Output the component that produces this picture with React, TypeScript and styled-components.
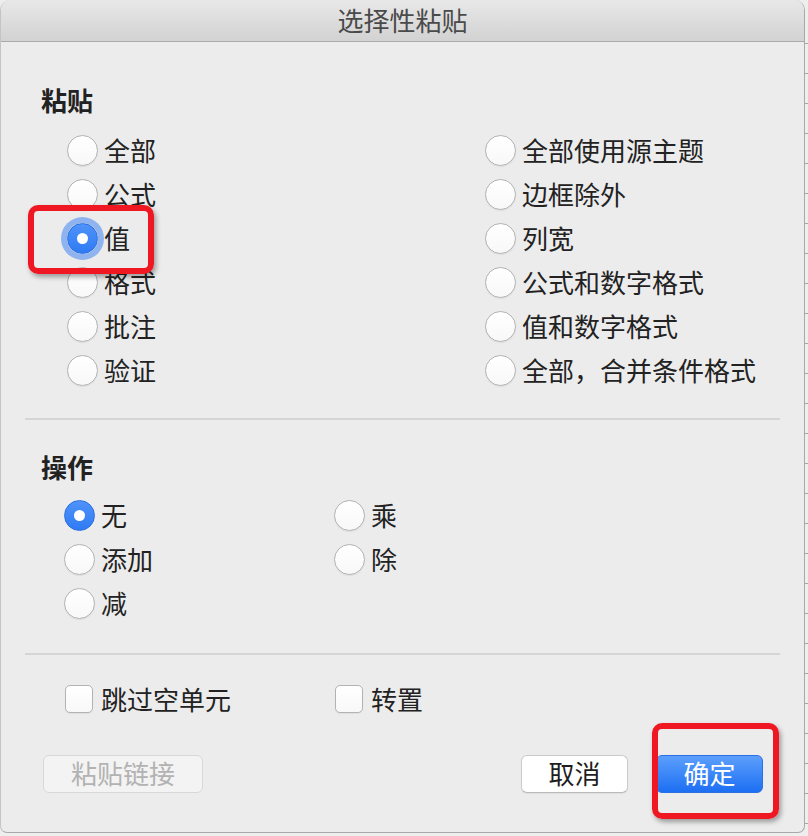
import React from "react";
import styled, { createGlobalStyle, css } from "styled-components";

const GlobalStyle = createGlobalStyle`
  html, body { margin: 0; padding: 0; }
  body {
    background: #ededed;
    font-family: "Noto Sans CJK SC", "Noto Sans", sans-serif;
  }
  * { box-sizing: border-box; }
`;

const Page = styled.div`
  position: relative;
  width: 808px;
  height: 836px;
  overflow: hidden;
  background-color: #eeeeee;
  background-image: repeating-linear-gradient(
    to bottom,
    transparent 0 29px,
    #a8a8a8 29px 30px
  );
  background-position: 0 14px;
`;

const Dialog = styled.div`
  position: relative;
  width: 805px;
  height: 833px;
  background: #ececec;
  border: 1px solid #a9a9a9;
  border-top: none;
  border-left-color: #c4c4c4;
  border-radius: 10px 10px 7px 7px;
  display: flex;
  flex-direction: column;
  overflow: hidden;
  color: #222;
`;

const TitleBar = styled.div`
  flex: none;
  height: 42px;
  background: linear-gradient(to bottom, #e8e8e8, #d2d2d2);
  border-bottom: 1px solid #ababab;
  display: flex;
  align-items: center;
  justify-content: center;
  font-size: 26px;
  line-height: 41px;
  color: #4a4a4a;
  padding-bottom: 3px;
`;

const Section = styled.div<{ $top: number }>`
  padding-top: ${(p) => p.$top}px;
`;

const Heading = styled.div`
  padding-left: 40px;
  font-size: 26px;
  line-height: 30px;
  font-weight: 700;
  color: #222;
`;

const OptionGrid = styled.div<{ $left: number; $col: number; $gap: number }>`
  margin-top: ${(p) => p.$gap}px;
  padding-left: ${(p) => p.$left}px;
  display: grid;
  grid-template-columns: ${(p) => p.$col}px auto;
  grid-auto-flow: column;
`;

const Column = styled.div`
  display: flex;
  flex-direction: column;
`;

const Option = styled.label<{ $gap?: number }>`
  height: 44px;
  display: flex;
  align-items: center;
  gap: ${(p) => p.$gap ?? 6}px;
  font-size: 26px;
  line-height: 30px;
  white-space: nowrap;
`;

const Radio = styled.span<{ $checked?: boolean; $focus?: boolean }>`
  flex: none;
  width: 31px;
  height: 31px;
  border-radius: 50%;
  display: flex;
  align-items: center;
  justify-content: center;
  ${(p) =>
    p.$checked
      ? css`
          background: linear-gradient(to bottom, #4f93fa, #2f7bf4);
          border: 1px solid #2b6fdf;
          &::after {
            content: "";
            width: 11px;
            height: 11px;
            border-radius: 50%;
            background: #fff;
          }
        `
      : css`
          background: linear-gradient(to bottom, #ffffff, #f8f8f8);
          border: 1px solid #b3b3b3;
          box-shadow: 0 1px 1px rgba(0, 0, 0, 0.06);
        `}
  ${(p) =>
    p.$focus &&
    css`
      box-shadow: 0 0 0 6px rgba(112, 160, 240, 0.75);
    `}
`;

const Divider = styled.div<{ $top: number }>`
  margin: ${(p) => p.$top}px 24px 0 24px;
  height: 2px;
  background: #d5d5d5;
`;

const CheckRow = styled.div`
  margin-top: 22px;
  padding-left: 64px;
  display: grid;
  grid-template-columns: 270px auto;
`;

const Checkbox = styled.span`
  flex: none;
  width: 28px;
  height: 28px;
  border-radius: 5px;
  background: linear-gradient(to bottom, #ffffff, #f8f8f8);
  border: 1px solid #b3b3b3;
  box-shadow: 0 1px 1px rgba(0, 0, 0, 0.06);
`;

const ButtonRow = styled.div`
  margin-top: 34px;
  padding: 0 41px 0 42px;
  display: flex;
  align-items: center;
  gap: 28px;
`;

const Spacer = styled.div`
  flex: 1;
`;

const Button = styled.button<{ $variant?: "default" | "primary" | "disabled"; $w: number }>`
  width: ${(p) => p.$w}px;
  height: 38px;
  border-radius: 6px;
  font-family: "Noto Sans CJK SC", sans-serif;
  font-size: 26px;
  line-height: 30px;
  padding: 0 0 2px 0;
  display: flex;
  align-items: center;
  justify-content: center;
  ${(p) =>
    p.$variant === "primary"
      ? css`
          background: linear-gradient(to bottom, #5c9ffc, #1d6ff3);
          border: 1px solid #2a6fe4;
          color: #fff;
        `
      : p.$variant === "disabled"
      ? css`
          background: #f3f3f3;
          border: 1px solid #d8d8d8;
          color: #b2b2b2;
        `
      : css`
          background: #ffffff;
          border: 1px solid #cbcbcb;
          border-bottom-color: #b9b9b9;
          color: #1e1e1e;
          box-shadow: 0 1px 1px rgba(0, 0, 0, 0.06);
        `}
`;

const Annotation = styled.div<{ $x: number; $y: number; $w: number; $h: number }>`
  position: absolute;
  left: ${(p) => p.$x}px;
  top: ${(p) => p.$y}px;
  width: ${(p) => p.$w}px;
  height: ${(p) => p.$h}px;
  border: 6px solid #ef1722;
  border-radius: 10px;
  box-shadow: 2px 3px 5px rgba(0, 0, 0, 0.35);
  pointer-events: none;
`;

type Opt = { label: string; checked?: boolean; focus?: boolean };

const pasteLeft: Opt[] = [
  { label: "全部" },
  { label: "公式" },
  { label: "值", checked: true, focus: true },
  { label: "格式" },
  { label: "批注" },
  { label: "验证" },
];
const pasteRight: Opt[] = [
  { label: "全部使用源主题" },
  { label: "边框除外" },
  { label: "列宽" },
  { label: "公式和数字格式" },
  { label: "值和数字格式" },
  { label: "全部，合并条件格式" },
];
const opLeft: Opt[] = [{ label: "无", checked: true }, { label: "添加" }, { label: "减" }];
const opRight: Opt[] = [{ label: "乘" }, { label: "除" }];

const OptionList = ({ items }: { items: Opt[] }) => (
  <Column>
    {items.map((o) => (
      <Option key={o.label}>
        <Radio $checked={o.checked} $focus={o.focus} />
        <span>{o.label}</span>
      </Option>
    ))}
  </Column>
);

export default function App() {
  return (
    <>
      <GlobalStyle />
      <Page>
        <Dialog>
          <TitleBar>选择性粘贴</TitleBar>

          <Section $top={43}>
            <Heading>粘贴</Heading>
            <OptionGrid $left={66} $col={418} $gap={13}>
              <OptionList items={pasteLeft} />
              <OptionList items={pasteRight} />
            </OptionGrid>
          </Section>

          <Divider $top={26} />

          <Section $top={32}>
            <Heading>操作</Heading>
            <OptionGrid $left={63} $col={270} $gap={11}>
              <OptionList items={opLeft} />
              <OptionList items={opRight} />
            </OptionGrid>
          </Section>

          <Divider $top={28} />

          <CheckRow>
            <Option $gap={8}>
              <Checkbox />
              <span>跳过空单元</span>
            </Option>
            <Option $gap={8}>
              <Checkbox />
              <span>转置</span>
            </Option>
          </CheckRow>

          <ButtonRow>
            <Button $variant="disabled" $w={160} disabled>
              粘贴链接
            </Button>
            <Spacer />
            <Button $w={107}>取消</Button>
            <Button $variant="primary" $w={107}>
              确定
            </Button>
          </ButtonRow>

          <Annotation $x={27} $y={205} $w={126} $h={69} />
          <Annotation $x={651} $y={723} $w={127} $h={96} />
        </Dialog>
      </Page>
    </>
  );
}
